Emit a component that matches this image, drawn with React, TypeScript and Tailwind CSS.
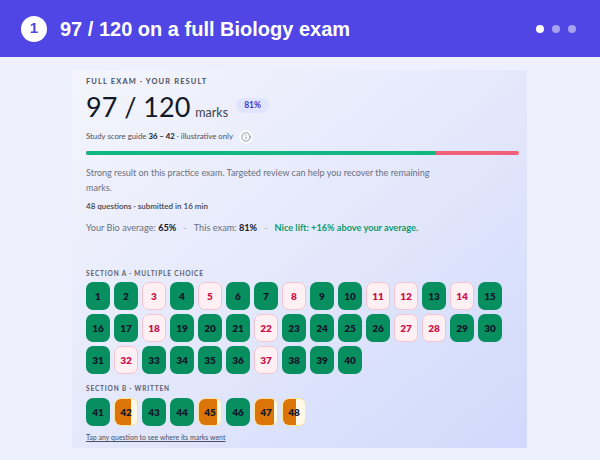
import { Info } from "lucide-react";

const wrongA = [3, 5, 8, 11, 12, 14, 18, 22, 27, 28, 32, 37];

// written answers: share of marks earned (1 = full marks)
const sectionB: { n: number; part: number }[] = [
  { n: 41, part: 1 },
  { n: 42, part: 0.72 },
  { n: 43, part: 1 },
  { n: 44, part: 1 },
  { n: 45, part: 0.82 },
  { n: 46, part: 1 },
  { n: 47, part: 0.88 },
  { n: 48, part: 0.57 }
];

function Tile({ n, state, part = 1 }: { n: number; state: "right" | "wrong" | "part"; part?: number }) {
  if (state === "right") {
    return (
      <div className="w-[24px] h-[28px] rounded-[7px] bg-[#078f5f] flex items-center justify-center text-[10px] font-extrabold text-[#0f172a]">
        {n}
      </div>
    );
  }
  if (state === "wrong") {
    return (
      <div className="w-[24px] h-[28px] rounded-[7px] bg-[#fff1f3] border border-[#f7c3cf] flex items-center justify-center text-[10px] font-extrabold text-[#c8104a]">
        {n}
      </div>
    );
  }
  return (
    <div className="relative w-[24px] h-[28px] rounded-[7px] bg-[#fffae8] border border-[#fbe39a] overflow-hidden flex items-center justify-center text-[10px] font-extrabold text-[#0f172a]">
      <div className="absolute left-0 top-0 bottom-0 bg-[#dc7407]" style={{ width: `${part * 100}%` }} />
      <span className="relative">{n}</span>
    </div>
  );
}

export default function App() {
  const nums = Array.from({ length: 40 }, (_, i) => i + 1);

  return (
    <div className="min-h-screen bg-[#eef1fd]">
      <header className="h-[57px] bg-[#4f46e5] flex items-center pl-[21px] pr-[24px]">
        <div className="w-[26px] h-[26px] rounded-full bg-white flex items-center justify-center font-['Liberation_Sans',Arial,sans-serif] font-bold text-[15px] text-[#4f46e5]">
          1
        </div>
        <h1 className="ml-[13px] font-['Liberation_Sans',Arial,sans-serif] font-bold text-[20px] text-white">
          97 / 120 on a full Biology exam
        </h1>
        <div className="ml-auto flex items-center gap-[8px]">
          <span className="w-[8px] h-[8px] rounded-full bg-white" />
          <span className="w-[8px] h-[8px] rounded-full bg-white/50" />
          <span className="w-[8px] h-[8px] rounded-full bg-white/50" />
        </div>
      </header>

      <main className="ml-[72px] mt-[13px] w-[455px] h-[378px] bg-linear-to-br from-[#f4f5fc] via-[#e4e8fb] to-[#d0d9fc] pl-[14px] pr-[8px] pt-[6px] font-['Lato',sans-serif]">
        <div className="text-[7.5px] leading-[11px] font-bold tracking-[0.15em] text-[#4b5160]">
          FULL EXAM · YOUR RESULT
        </div>

        <div className="h-[34px] flex items-baseline leading-none pt-[6px]">
          <span className="text-[27px] text-[#111827]">97 / 120</span>
          <span className="ml-[5px] text-[12.5px] text-[#3f4452]">marks</span>
          <span className="ml-[8px] self-start mt-[5px] px-[8px] h-[15px] rounded-full bg-[#e0e5fd] text-[8.5px] leading-[15px] font-bold text-[#4338ca]">
            81%
          </span>
        </div>

        <div className="mt-[9px] h-[14px] flex items-center text-[7.8px] text-[#4b5160]">
          <span>
            Study score guide <b className="text-[#111827]">36 – 42</b> · illustrative only
          </span>
          <span className="ml-[6px] w-[14px] h-[14px] rounded-full bg-white/70 flex items-center justify-center">
            <Info size={10} strokeWidth={1.6} className="text-[#6b7280]" />
          </span>
        </div>

        <div className="mt-[7px] h-[4px] rounded-full bg-[#f2617a] overflow-hidden">
          <div className="h-full w-[80.8%] bg-[#10b77f]" />
        </div>

        <p className="mt-[10px] max-w-[360px] text-[9px] leading-[15px] text-[#6b7080]">
          Strong result on this practice exam. Targeted review can help you recover the remaining marks.
        </p>

        <div className="mt-[5px] text-[8px] leading-[12px] font-semibold text-[#3f4452]">
          48 questions · submitted in 16 min
        </div>

        <div className="mt-[9px] text-[9.2px] leading-[14px] text-[#6b7080]">
          Your Bio average: <b className="text-[#111827]">65%</b>
          <span className="mx-[7px] text-[#9ca3af]">-</span>
          This exam: <b className="text-[#111827]">81%</b>
          <span className="mx-[7px] text-[#9ca3af]">-</span>
          <b className="text-[#0e9a6c]">Nice lift: +16% above your average.</b>
        </div>

        <div className="mt-[34px] text-[6.5px] leading-[10px] font-bold tracking-[0.13em] text-[#5b6170]">
          SECTION A · MULTIPLE CHOICE
        </div>
        <div className="mt-[3px] grid grid-cols-[repeat(15,24px)] gap-[4px]">
          {nums.map((n) => (
            <Tile key={n} n={n} state={wrongA.includes(n) ? "wrong" : "right"} />
          ))}
        </div>

        <div className="mt-[10px] text-[6.5px] leading-[10px] font-bold tracking-[0.13em] text-[#5b6170]">
          SECTION B · WRITTEN
        </div>
        <div className="mt-[4px] flex gap-[4px]">
          {sectionB.map((q) => (
            <Tile key={q.n} n={q.n} state={q.part === 1 ? "right" : "part"} part={q.part} />
          ))}
        </div>

        <div className="mt-[6px] text-[7px] leading-[10px] text-[#4b5160] underline">
          Tap any question to see where its marks went
        </div>
      </main>
    </div>
  );
}
